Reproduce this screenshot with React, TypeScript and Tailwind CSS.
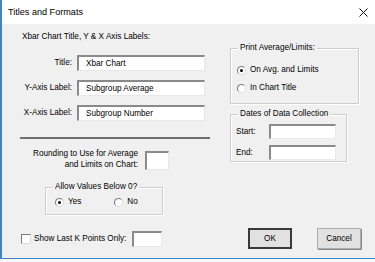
import React from "react";

const font = "font-['Liberation_Sans',Arial,sans-serif] text-[8.2px] leading-[10px] text-black whitespace-nowrap";

// sunken windows text box
function Box({ w, h = 16, value }: { w: number; h?: number; value?: string }) {
  return (
    <div
      className="bg-white border-t-2 border-l-2 border-t-[#8a8a8a] border-l-[#8a8a8a] border-b border-r border-b-[#e8e8e8] border-r-[#e8e8e8] flex items-center pl-[7px] overflow-hidden"
      style={{ width: w, height: h }}
    >
      {value}
    </div>
  );
}

function Radio({ checked, label }: { checked?: boolean; label: string }) {
  return (
    <div className="flex items-center gap-[4px]">
      <span className="w-[9px] h-[9px] rounded-full bg-white border border-t-[#7a7a7a] border-l-[#7a7a7a] border-b-[#dcdcdc] border-r-[#dcdcdc] flex items-center justify-center">
        {checked && <span className="w-[3px] h-[3px] rounded-full bg-black" />}
      </span>
      <span>{label}</span>
    </div>
  );
}

function Group({ title, className, children }: { title: string; className: string; children: React.ReactNode }) {
  return (
    <fieldset className={"border border-[#cdcdcd] shadow-[inset_1px_1px_0_#ffffff,1px_1px_0_#ffffff] " + className}>
      <legend className="ml-[7px] px-[2px]">{title}</legend>
      {children}
    </fieldset>
  );
}

function Button({ label, primary }: { label: string; primary?: boolean }) {
  return (
    <div
      className={
        "w-[44px] h-[21px] flex items-center justify-center bg-[#e1e1e1] " +
        (primary ? "border-2 border-[#3a3a3a]" : "border border-[#adadad] shadow-[1px_1px_0_#8a8a8a]")
      }
    >
      {label}
    </div>
  );
}

export default function App() {
  return (
    <div className={"w-[375px] h-[262px] bg-[#fafafa] " + font}>
      <div className="h-[259px] border-l-2 border-b border-[#3f86c4] bg-[#f0f0f0] flex flex-col">
        {/* title bar */}
        <div className="h-[24px] shrink-0 bg-white flex items-center justify-between pl-[6px] pr-[7px] text-[9.1px] font-['Liberation_Sans',sans-serif]">
          <span>Titles and Formats</span>
          <svg width="9" height="9" viewBox="0 0 9 9">
            <path d="M0.5 0.5 L8.5 8.5 M8.5 0.5 L0.5 8.5" stroke="#111" strokeWidth="1" />
          </svg>
        </div>

        <div className="flex pt-[8px]">
          {/* left column */}
          <div className="w-[228px] flex flex-col pl-[18px]">
            <div className="pl-[2px]">Xbar Chart Title, Y &amp; X Axis Labels:</div>
            <div className="flex flex-col gap-[9px] mt-[13px]">
              {[
                ["Title:", "Xbar Chart"],
                ["Y-Axis Label:", "Subgroup Average"],
                ["X-Axis Label:", "Subgroup Number"],
              ].map(([label, value]) => (
                <div key={label} className="flex items-center">
                  <span className="w-[52px] text-right">{label}</span>
                  <span className="ml-[5px]">
                    <Box w={128} value={value} />
                  </span>
                </div>
              ))}
            </div>
            <div className="mt-[16px] w-[190px] h-[2px] bg-[#707070]" />
            <div className="flex items-end mt-[9px]">
              <div className="w-[118px] text-right leading-[11px]">
                Rounding to Use for Average
                <br />
                and Limits on Chart:
              </div>
              <span className="ml-[7px]">
                <Box w={24} h={19} />
              </span>
            </div>
            <Group title="Allow Values Below 0?" className="ml-[25px] mt-[12px] w-[118px] h-[33px]">
              <div className="flex pl-[9px] mt-[5px] gap-[33px]">
                <Radio checked label="Yes" />
                <Radio label="No" />
              </div>
            </Group>
          </div>

          {/* right column */}
          <div className="flex flex-col pt-[11px]">
            <Group title="Print Average/Limits:" className="w-[129px] h-[61px]">
              <div className="flex flex-col gap-[8px] pl-[6px] mt-[12px]">
                <Radio checked label="On Avg. and Limits" />
                <Radio label="In Chart Title" />
              </div>
            </Group>
            <Group title="Dates of Data Collection" className="w-[117px] h-[53px] mt-[5px]">
              <div className="flex flex-col gap-[6px] pl-[5px] mt-[5px]">
                <div className="flex items-center">
                  <span className="w-[33px]">Start:</span>
                  <Box w={67} h={15} />
                </div>
                <div className="flex items-center">
                  <span className="w-[33px]">End:</span>
                  <Box w={67} h={15} />
                </div>
              </div>
            </Group>
          </div>
        </div>

        {/* bottom row */}
        <div className="flex items-center mt-auto mb-[9px]">
          <div className="w-[228px] flex items-center pl-[19px]">
            <span className="w-[10px] h-[10px] bg-white border border-t-[#7a7a7a] border-l-[#7a7a7a] border-b-[#dcdcdc] border-r-[#dcdcdc]" />
            <span className="ml-[3px]">Show Last K Points Only:</span>
            <span className="ml-[6px]">
              <Box w={30} />
            </span>
          </div>
          <div className="flex gap-[25px] ml-[18px]">
            <Button label="OK" primary />
            <Button label="Cancel" />
          </div>
        </div>
      </div>
    </div>
  );
}
